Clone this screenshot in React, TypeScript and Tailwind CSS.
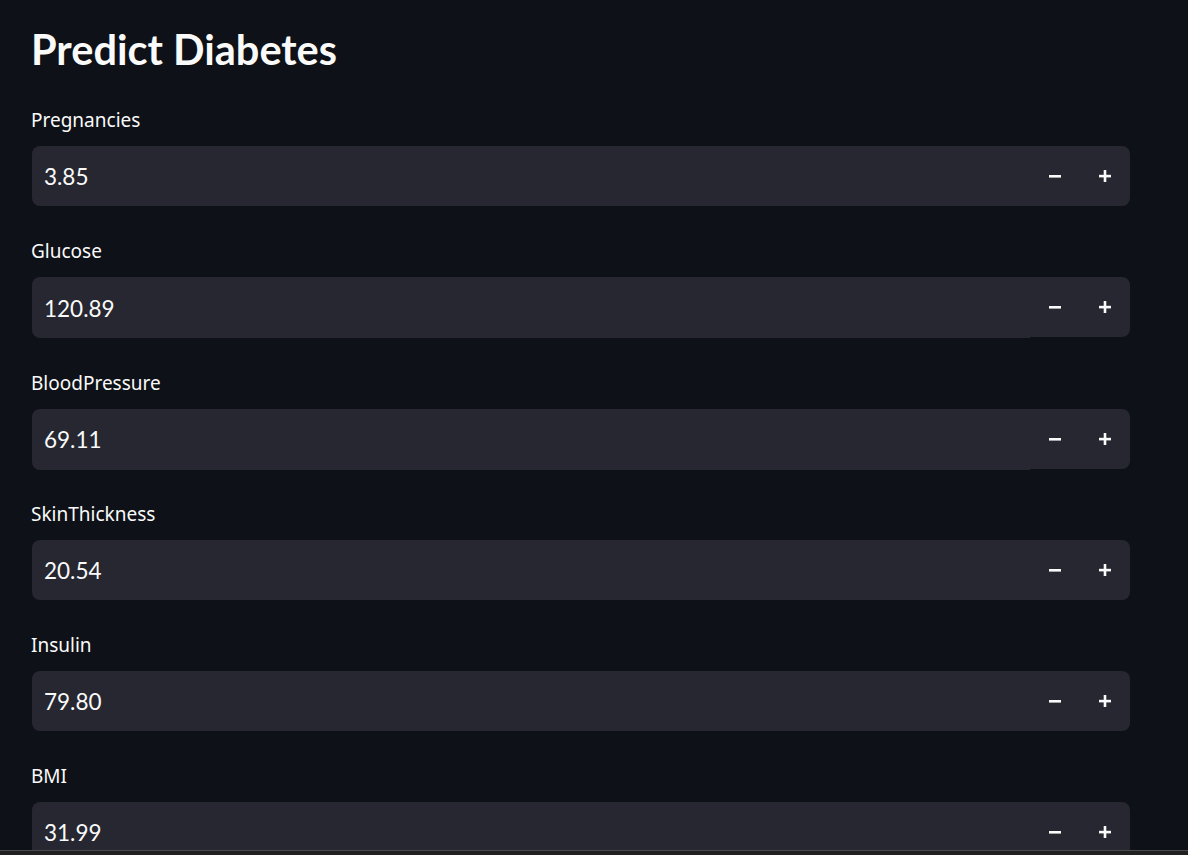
import React from "react";

const fields: { label: string; value: string; split?: boolean }[] = [
  { label: "Pregnancies", value: "3.85" },
  { label: "Glucose", value: "120.89", split: true },
  { label: "BloodPressure", value: "69.11", split: true },
  { label: "SkinThickness", value: "20.54" },
  { label: "Insulin", value: "79.80" },
  { label: "BMI", value: "31.99" },
];

function Minus() {
  return (
    <svg width="12" height="12" viewBox="0 0 12 12" aria-hidden>
      <rect x="0" y="5" width="12" height="2.6" fill="#fafafa" />
    </svg>
  );
}

function Plus() {
  return (
    <svg width="12" height="12" viewBox="0 0 12 12" aria-hidden>
      <rect x="0" y="4.8" width="12" height="2.6" fill="#fafafa" />
      <rect x="4.7" y="0" width="2.6" height="12" fill="#fafafa" />
    </svg>
  );
}

function Field({ label, value, split }: { label: string; value: string; split?: boolean }) {
  return (
    <div className="flex flex-col">
      <label
        className="text-[19px] leading-[28px] text-[#fafafa]"
        style={{ fontFamily: "'Noto Sans', Lato, sans-serif" }}
      >
        {label}
      </label>
      <div className="mt-[12px] ml-px flex h-[60px] w-[1098px] items-start">
        <div
          className={`flex flex-1 items-center rounded-l-[8px] bg-[#262730] pl-3 pt-[2px] ${
            split ? "h-[61px]" : "h-[60px]"
          }`}
        >
          <span className="text-[22.5px] leading-[58px] text-[#fafafa]">{value}</span>
        </div>
        <div className="flex h-[60px] w-[100px] items-center rounded-r-[8px] bg-[#262730]">
          <button className="flex h-full w-[50px] items-center justify-center">
            <Minus />
          </button>
          <button className="flex h-full w-[50px] items-center justify-center">
            <Plus />
          </button>
        </div>
      </div>
    </div>
  );
}

export default function App() {
  return (
    <div
      className="relative h-[855px] w-[1188px] overflow-hidden bg-[#0e1117]"
      style={{ fontFamily: "Lato, 'Noto Sans', sans-serif" }}
    >
      <div className="flex flex-col gap-[31.2px] pl-[31px] pt-[23px]">
        <h1 className="text-[41.5px] font-bold leading-[52px] text-[#fafafa]">Predict Diabetes</h1>
        {fields.map((f) => (
          <Field key={f.label} {...f} />
        ))}
      </div>
      <div className="absolute bottom-0 left-0 h-[5px] w-full border-t border-[#4a4a4a] bg-[#202020]" />
    </div>
  );
}
